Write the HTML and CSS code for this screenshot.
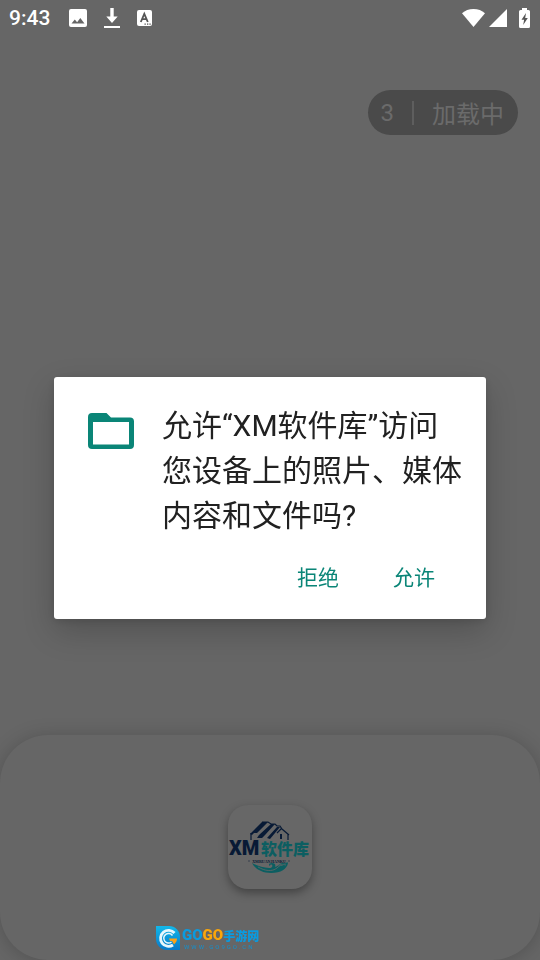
FILE: index.html
```html
<!DOCTYPE html>
<html lang="zh-CN">
<head>
    <meta charset="UTF-8">
    <meta name="viewport" content="width=device-width, initial-scale=1.0">
    <title>XM软件库</title>
    <link rel="stylesheet" href="styles.css">
</head>
<body>
    <header class="status-bar">
        <span class="time">9:43</span>
        <div class="notifications">
            <svg width="18" height="18" viewBox="0 0 18 18">
                <path fill="#fff" fill-rule="evenodd" d="M2 0h14a2 2 0 0 1 2 2v14a2 2 0 0 1-2 2H2a2 2 0 0 1-2-2V2a2 2 0 0 1 2-2zM2.500 14.500h13L11.300 9l-3.200 4.200-2.300-2.800z"/>
            </svg>
            <svg width="16" height="20" viewBox="0 0 16 20">
                <path fill="#fff" d="M6.300 0h3.400v8.500h4L8 15 2.300 8.500h4zM0 18h16v2H0z"/>
            </svg>
            <svg width="15" height="16" viewBox="0 0 15 16">
                <rect width="15" height="16" rx="2" fill="#fff"/>
                <path fill="none" stroke="#555" stroke-width="1.800" d="M3.800 12L7.300 3.800 10.800 12M5 9.200h4.600"/>
                <path fill="#555" d="M7.500 13.500h1.300v1.300H7.500zM10 13.500h1.300v1.300H10zM12.400 13.500h1.300v1.300h-1.300z"/>
            </svg>
        </div>
        <div class="system">
            <svg class="wifi" width="23" height="18" viewBox="0 0 23 18">
                <path fill="#fff" d="M11.500 18L0 4.200C3 1.500 7 0 11.500 0S20 1.500 23 4.200z"/>
            </svg>
            <svg class="signal" width="18" height="18" viewBox="0 0 18 18">
                <path fill="#fff" d="M0 18L18 0v18z"/>
            </svg>
            <svg width="11" height="20" viewBox="0 0 11 20">
                <path fill="#fff" d="M3 0h5v2h1.500A1.500 1.500 0 0 1 11 3.500v15A1.500 1.500 0 0 1 9.500 20h-8A1.500 1.500 0 0 1 0 18.500v-15A1.500 1.500 0 0 1 1.500 2H3z"/>
                <path fill="#555" d="M7 5L2.500 11.800h2.600L4.200 17 8.800 10H6.200z"/>
            </svg>
        </div>
    </header>

    <main class="splash">
        <button class="skip" type="button">
            <span>3</span>
            <span class="divider"></span>
            <span>加载中</span>
        </button>
    </main>

    <footer class="panel">
        <div class="app-icon">
            <svg width="84" height="84" viewBox="0 0 84 84" role="img" aria-label="XM软件库">
                <!-- house -->
                <path fill="#081a35" d="M22 29L34 17h6L29 28h-3l-2 2zM31 30L43 19h4L37 30l-3 3h-5zM39 33L49 22h3L42 34z"/>
                <path fill="none" stroke="#081a35" stroke-width="1.200" d="M23 28v7M34 17h6l3 2h4l2 2h3l2 3 7 6M60 29v6M49 28l5-5"/>
                <path fill="#081a35" d="M52 29h2v5h-2z"/>
                <text class="logo-latin" x="1" y="50">XM</text>
                <text class="logo-cjk" x="33" y="50">软件库</text>
                <text class="logo-sub" x="41" y="58">XMRUANJIANKU</text>
                <path stroke="#081a35" stroke-width=".5" d="M20 56h2M60 56h2"/>
                <!-- wave -->
                <path fill="#0c5e61" d="M24 58c5 3 11 5 17 5 3 0 4-2 3-3s-2 0-2 1c-2-1-1-3 2-3s4 2 3 4c4-1 4-4 8-4 2 0 3 1 4-1l1 1c-1 6-7 10-17 10-9 0-16-4-19-10z"/>
                <path fill="none" stroke="#666" stroke-width=".8" d="M30 62c7 4 14 5 19 1 3-3 6-4 9-3M51 61c0-2 3-2 3 0"/>
            </svg>
        </div>
    </footer>

    <div class="overlay">
        <div class="dialog" role="dialog" aria-modal="true" aria-labelledby="message">
            <div class="content">
                <svg class="folder" width="46" height="36" viewBox="0 0 46 36">
                    <path fill="#0a8577" fill-rule="evenodd" d="M4 0h14.500L23 4.500h19a4 4 0 0 1 4 4V32a4 4 0 0 1-4 4H4a4 4 0 0 1-4-4V4a4 4 0 0 1 4-4zM5 9v22.500h36V9z"/>
                </svg>
                <p class="message" id="message">允许“XM软件库”访问您设备上的照片、媒体内容和文件吗?</p>
            </div>
            <div class="actions">
                <button class="button" type="button">拒绝</button>
                <button class="button" type="button">允许</button>
            </div>
        </div>
    </div>

    <div class="watermark">
        <svg width="24" height="24" viewBox="0 0 24 24">
            <defs>
                <linearGradient id="badge" x1="0" y1="0" x2="0" y2="1">
                    <stop offset="0" stop-color="#12b8ea"/>
                    <stop offset="1" stop-color="#0878c8"/>
                </linearGradient>
            </defs>
            <path fill="url(#badge)" d="M0 0h13a11 11 0 0 1 11 11v13H11A11 11 0 0 1 0 13z"/>
            <path fill="none" stroke="#e8f6fc" stroke-width="2.800" d="M18.500 7A8 8 0 1 0 17 19"/>
            <path fill="none" stroke="#e8f6fc" stroke-width="1.500" d="M16.500 9.500A4.800 4.800 0 1 0 15.500 16"/>
            <path fill="#f9a11b" d="M13 12.500h8c0 2.500-1 4-3 6l-2-3.500h-2z"/>
        </svg>
        <div class="brand">
            <div class="brand-name"><span class="blue">GO</span><span class="orange">GO</span><span class="cjk">手游网</span></div>
            <div class="brand-url">WWW.GO9GO.CN</div>
        </div>
    </div>
</body>
</html>
```
FILE: styles.css
```css
* {
    box-sizing: border-box;
}
body {
    font-family: Roboto, "Noto Sans CJK SC", sans-serif;
    background: #666;
    margin: 0;
    min-height: 100vh;
    display: flex;
    flex-direction: column;
}
svg {
    display: block;
}
.status-bar {
    height: 36px;
    padding: 0 10px 0 9px;
    display: flex;
    align-items: center;
    color: #fff;
}
.time {
    font-size: 21px;
    font-weight: 500;
}
.notifications {
    display: flex;
    align-items: center;
    gap: 17px;
    margin-left: 19px;
}
.system {
    display: flex;
    align-items: center;
    margin-left: auto;
}
.wifi {
    margin-right: 4px;
}
.signal {
    margin-right: 12px;
}
.splash {
    flex: 1;
    padding: 54px 22px 0;
    display: flex;
    justify-content: flex-end;
    align-items: flex-start;
}
.skip {
    height: 45px;
    padding: 0 14px 0 13px;
    display: flex;
    align-items: center;
    gap: 18px;
    background: #4a4a4a;
    color: #6b6b6b;
    border: none;
    border-radius: 24px;
    font-family: inherit;
    font-size: 24px;
    cursor: pointer;
}
.divider {
    width: 2px;
    height: 24px;
    background: #5e5e5e;
}
.panel {
    padding: 70px 0 71px;
    display: flex;
    justify-content: center;
    border-radius: 48px;
    background: #666;
    box-shadow: 0 2px 20px rgba(0, 0, 0, 0.2);
}
.app-icon {
    border-radius: 20px;
    background: #676767;
    box-shadow: 0 4px 10px rgba(0, 0, 0, 0.35);
}
.logo-latin {
    font-size: 20px;
    font-weight: 900;
    fill: #081a35;
}
.logo-cjk {
    font-size: 16px;
    font-weight: 900;
    fill: #0c5e61;
}
.logo-sub {
    font-family: "Liberation Serif", serif;
    font-size: 4px;
    font-weight: bold;
    text-anchor: middle;
    fill: #081a35;
}

/* permission dialog */
.overlay {
    position: fixed;
    inset: 36px 0 0;
    display: flex;
    align-items: center;
    justify-content: center;
}
.dialog {
    width: 80%;
    padding: 26px 22px 19px 34px;
    background: #fff;
    border-radius: 3px;
    box-shadow: 0 12px 32px rgba(0, 0, 0, 0.2), 0 2px 8px rgba(0, 0, 0, 0.12);
}
.content {
    display: flex;
    align-items: flex-start;
    gap: 28px;
}
.folder {
    flex: none;
    margin-top: 10px;
}
.message {
    flex: 1;
    margin: 0;
    font-size: 30px;
    line-height: 45px;
    color: #212121;
}
.actions {
    display: flex;
    justify-content: flex-end;
    gap: 22px;
    padding-right: 13px;
    margin-top: 14px;
}
.button {
    height: 48px;
    padding: 0 16px;
    border: none;
    background: none;
    color: #0a8577;
    font-family: inherit;
    font-size: 21px;
    cursor: pointer;
}

.watermark {
    position: fixed;
    left: 156px;
    bottom: 10px;
    display: flex;
    gap: 2px;
}
.brand-name {
    display: flex;
    align-items: center;
    height: 18px;
    font-size: 15px;
    font-weight: 900;
}
.blue,
.cjk {
    color: #0a9be0;
}
.orange {
    color: #fca60a;
}
.cjk {
    font-size: 12px;
}
.brand-url {
    font-size: 6px;
    line-height: 6px;
    letter-spacing: 2px;
    padding-left: 2px;
    color: #1590cc;
}
```
